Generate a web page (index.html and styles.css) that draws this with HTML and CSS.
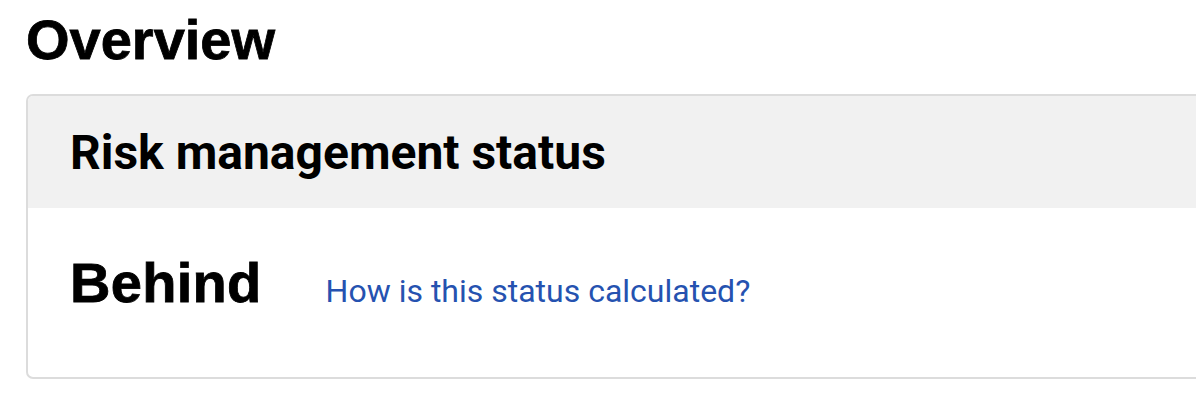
FILE: index.html
```html
<!DOCTYPE html>
<html lang="en">
<head>
    <meta charset="UTF-8">
    <meta name="viewport" content="width=device-width, initial-scale=1.0">
    <title>Overview</title>
    <link rel="stylesheet" href="styles.css">
</head>
<body>
    <main class="page">
        <h1 class="page-title">Overview</h1>
        <section class="card">
            <div class="card-header">
                <h2>Risk management status</h2>
            </div>
            <div class="card-body">
                <span class="status">Behind</span>
                <a class="help-link" href="#">How is this status calculated?</a>
            </div>
        </section>
    </main>
</body>
</html>
```

FILE: styles.css
```css
* {
    margin: 0;
    padding: 0;
    box-sizing: border-box;
}

body {
    background-color: #ffffff;
    color: #000000;
    font-family: "Liberation Sans", Arial, sans-serif;
    overflow: hidden;
}

.page {
    padding: 8px 0 0 26px;
    width: 1230px;
}

.page-title {
    font-size: 56px;
    font-weight: 700;
    line-height: 64px;
    margin-bottom: 22px;
    -webkit-text-stroke: 0.8px #000;
}

.card {
    border: 2px solid #dcdcdc;
    border-radius: 7px;
    overflow: hidden;
}

.card-header {
    background-color: #f1f1f1;
    padding: 0 42px;
    height: 112px;
    display: flex;
    align-items: center;
}

.card-header h2 {
    font-family: Roboto, sans-serif;
    font-size: 48px;
    font-weight: 700;
    line-height: 56px;
    padding-top: 2px;
}

.card-body {
    display: flex;
    align-items: baseline;
    gap: 64px;
    padding: 42px 42px 0;
    height: 169px;
}

.status {
    font-size: 56px;
    font-weight: 700;
    letter-spacing: 0.3px;
    -webkit-text-stroke: 0.8px #000;
}

.help-link {
    font-family: Roboto, sans-serif;
    font-size: 32px;
    color: #2552b0;
    text-decoration: none;
}
```
